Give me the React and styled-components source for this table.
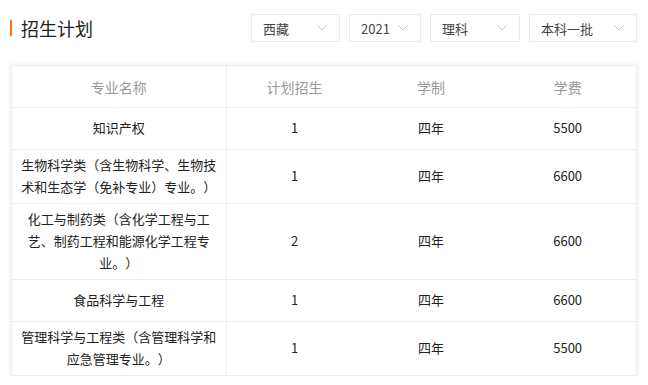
import styled, { createGlobalStyle } from "styled-components";

const GlobalStyle = createGlobalStyle`
  html, body {
    margin: 0;
    padding: 0;
    background: #fff;
  }
  body {
    font-family: "Noto Sans CJK SC", "Microsoft YaHei", "Noto Sans", sans-serif;
    color: #333;
    text-spacing-trim: space-all;
  }
`;

const Page = styled.div`
  width: 648px;
  padding: 14px 11px 0 10px;
  box-sizing: border-box;
`;

const Header = styled.div`
  display: flex;
  align-items: center;
  justify-content: space-between;
  height: 28px;
`;

const Title = styled.h2`
  display: flex;
  align-items: center;
  margin: 0;
  font-size: 18px;
  font-weight: 400;
  color: #222;
  line-height: 24px;

  &::before {
    content: "";
    width: 2px;
    height: 16px;
    margin-right: 9px;
    background: #ff7315;
  }
`;

const Filters = styled.div`
  display: flex;
  gap: 9px;
`;

const Select = styled.div`
  display: flex;
  align-items: center;
  justify-content: space-between;
  width: ${(props) => props.w}px;
  height: 28px;
  padding: 0 12px 0 11px;
  box-sizing: border-box;
  border: 1px solid #ebebeb;
  font-size: 13px;
  color: #444;
`;

const Chevron = () => (
  <svg width="10" height="6" viewBox="0 0 10 6">
    <path d="M0.5 0.5 L5 5 L9.5 0.5" fill="none" stroke="#c8c8c8" strokeWidth="1" />
  </svg>
);

const Card = styled.div`
  margin: 23px 0 0 1px;
  border: 1px solid #eee;
  box-shadow: 0 0 6px rgba(0, 0, 0, 0.08);
`;

const Table = styled.table`
  width: 100%;
  border-collapse: collapse;
  table-layout: fixed;
  font-size: 13px;
`;

const Th = styled.th`
  height: 41px;
  padding: 0;
  font-weight: 400;
  font-size: 14px;
  color: #999;
  text-align: center;
  border-bottom: 1px solid #eee;
  border-right: ${(props) => (props.divider ? "1px solid #eee" : "none")};
`;

const Td = styled.td`
  height: 32px;
  padding: 4px 7px 5px;
  line-height: 22px;
  text-align: center;
  color: #222;
  border-bottom: ${(props) => (props.last ? "none" : "1px solid #eee")};
  border-right: ${(props) => (props.divider ? "1px solid #eee" : "none")};
`;

const filters = [
  { label: "西藏", w: 89 },
  { label: "2021", w: 72 },
  { label: "理科", w: 90 },
  { label: "本科一批", w: 108 },
];

const rows = [
  ["知识产权", "1", "四年", "5500"],
  ["生物科学类（含生物科学、生物技术和生态学（免补专业）专业。）", "1", "四年", "6600"],
  ["化工与制药类（含化学工程与工艺、制药工程和能源化学工程专业。）", "2", "四年", "6600"],
  ["食品科学与工程", "1", "四年", "6600"],
  ["管理科学与工程类（含管理科学和应急管理专业。）", "1", "四年", "5500"],
];

export default function App() {
  return (
    <Page>
      <GlobalStyle />
      <Header>
        <Title>招生计划</Title>
        <Filters>
          {filters.map((f) => (
            <Select key={f.label} w={f.w}>
              <span>{f.label}</span>
              <Chevron />
            </Select>
          ))}
        </Filters>
      </Header>
      <Card>
        <Table>
          <colgroup>
            <col style={{ width: 214 }} />
            <col />
            <col />
            <col />
          </colgroup>
          <thead>
            <tr>
              <Th divider>专业名称</Th>
              <Th>计划招生</Th>
              <Th>学制</Th>
              <Th>学费</Th>
            </tr>
          </thead>
          <tbody>
            {rows.map((r, i) => (
              <tr key={i}>
                <Td divider last={i === rows.length - 1}>{r[0]}</Td>
                <Td last={i === rows.length - 1}>{r[1]}</Td>
                <Td last={i === rows.length - 1}>{r[2]}</Td>
                <Td last={i === rows.length - 1}>{r[3]}</Td>
              </tr>
            ))}
          </tbody>
        </Table>
      </Card>
    </Page>
  );
}
